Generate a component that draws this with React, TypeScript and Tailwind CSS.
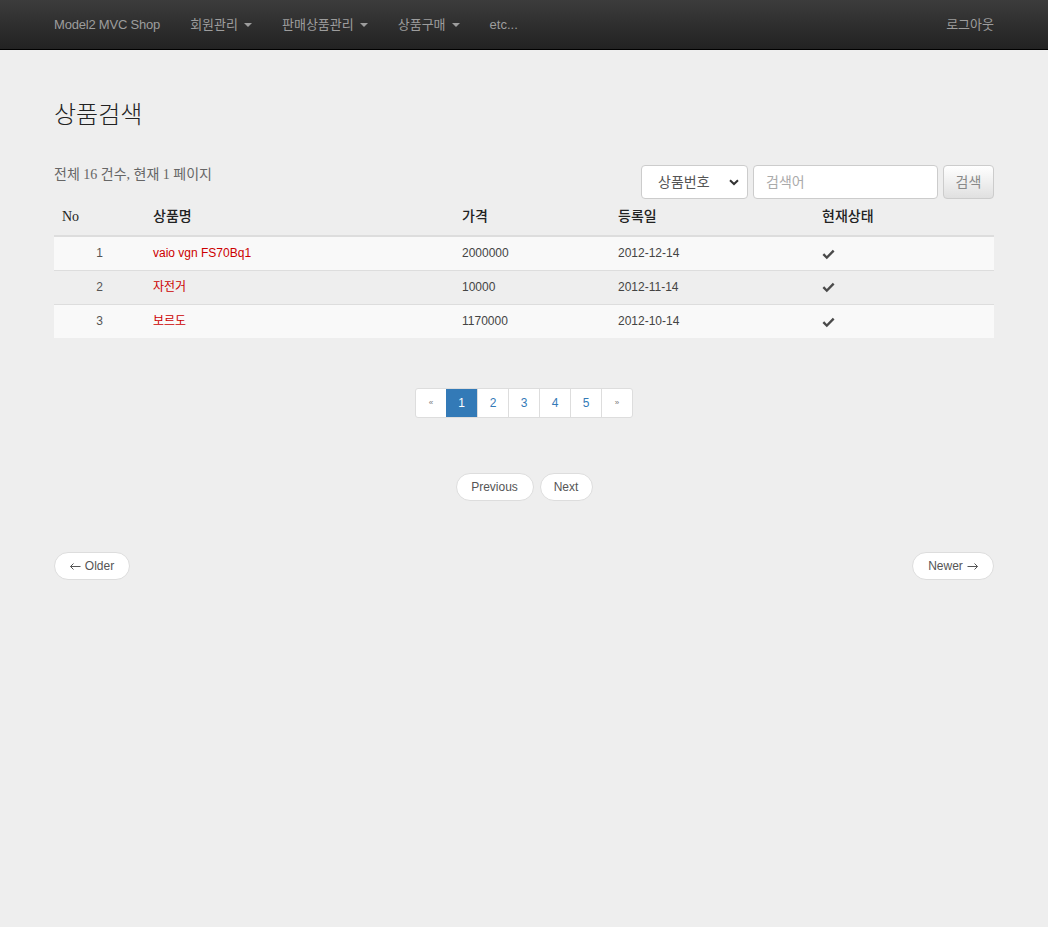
import React from 'react';

const sans = { fontFamily: '"Liberation Sans", "Noto Sans CJK KR", sans-serif' };
const serif = { fontFamily: '"Liberation Serif", "Noto Sans CJK KR", serif' };

const rows = [
  { no: 1, name: 'vaio vgn FS70Bq1', price: '2000000', date: '2012-12-14' },
  { no: 2, name: '자전거', price: '10000', date: '2012-11-14' },
  { no: 3, name: '보르도', price: '1170000', date: '2012-10-14' },
];

function Caret() {
  return <span className="ml-[6px] inline-block h-0 w-0 border-x-[4px] border-t-[4px] border-x-transparent border-t-[#9d9d9d] align-middle" />;
}

function CheckIcon() {
  return (
    <svg width="13" height="11" viewBox="0 0 13 11" className="inline-block">
      <path d="M0.5 6 L2.2 4.3 L4.8 6.9 L10.8 0.8 L12.5 2.5 L4.8 10.2 Z" fill="#4a4a4a" />
    </svg>
  );
}

function Arrow({ dir }: { dir: 'left' | 'right' }) {
  return (
    <svg width="11" height="7" viewBox="0 0 11 7" className={dir === 'left' ? '' : 'rotate-180'}>
      <path d="M0.5 3.5 H10.5 M3.5 0.5 L0.5 3.5 L3.5 6.5" stroke="#555" strokeWidth="1" fill="none" />
    </svg>
  );
}

export default function App() {
  return (
    <div className="min-h-[927px] bg-[#eeeeee] text-[#333]" style={sans}>
      <nav className="h-[50px] border-b border-black bg-gradient-to-b from-[#3c3c3c] to-[#222]">
        <div className="mx-auto flex h-[49px] w-[970px] items-center px-[15px] text-[13px] text-[#9d9d9d]">
          <span className="mr-[30px] tracking-[-0.2px]">Model2 MVC Shop</span>
          <span className="mr-[30px] flex items-center">회원관리<Caret /></span>
          <span className="mr-[30px] flex items-center">판매상품관리<Caret /></span>
          <span className="mr-[30px] flex items-center">상품구매<Caret /></span>
          <span>etc...</span>
          <span className="ml-auto">로그아웃</span>
        </div>
      </nav>

      <div className="mx-auto w-[970px] px-[15px]">
        <h1 className="mt-[48px] mb-[38px] text-[24px] font-light leading-[29px] text-[#222]" style={{ fontFamily: '"Noto Sans CJK KR", sans-serif' }}>상품검색</h1>

        <div className="flex items-start justify-between">
          <p className="text-[14px] leading-[20px] text-[#666]" style={serif}>전체 16 건수, 현재 1 페이지</p>
          <div className="flex gap-[5px]">
            <div className="flex h-[34px] w-[107px] items-center justify-between rounded-[4px] border border-[#ccc] bg-white pl-[16px] pr-[8px] text-[14px] text-[#555]">
              <span>상품번호</span>
              <svg width="10" height="7" viewBox="0 0 10 7"><path d="M1 1.2 L5 5 L9 1.2" stroke="#333" strokeWidth="2" fill="none" /></svg>
            </div>
            <div className="flex h-[34px] w-[185px] items-center rounded-[4px] border border-[#ccc] bg-white px-[12px] text-[14px] text-[#aaa]">검색어</div>
            <div className="flex h-[34px] w-[51px] items-center justify-center rounded-[4px] border border-[#ccc] bg-gradient-to-b from-white to-[#e0e0e0] text-[14px] text-[#888]">검색</div>
          </div>
        </div>

        <table className="mt-[6px] w-full border-collapse text-[12px]">
          <thead>
            <tr className="h-[31px] border-b-2 border-[#ddd] text-left text-[14px] text-[#222]" style={serif}>
              <th className="w-[91px] px-[8px] pb-[7px] font-medium">No</th>
              <th className="w-[309px] px-[8px] pb-[7px] font-medium">상품명</th>
              <th className="w-[156px] px-[8px] pb-[7px] font-medium">가격</th>
              <th className="w-[204px] px-[8px] pb-[7px] font-medium">등록일</th>
              <th className="px-[8px] pb-[7px] font-medium">현재상태</th>
            </tr>
          </thead>
          <tbody>
            {rows.map((r, i) => (
              <tr key={r.no} className={`h-[34px] border-t border-[#ddd] ${i % 2 === 0 ? 'bg-[#f9f9f9]' : ''}`}>
                <td className="px-[8px] text-center text-[#555]">{r.no}</td>
                <td className="px-[8px] text-[#c00]">{r.name}</td>
                <td className="px-[8px] text-[#444]">{r.price}</td>
                <td className="px-[8px] text-[#444]">{r.date}</td>
                <td className="px-[8px]"><CheckIcon /></td>
              </tr>
            ))}
          </tbody>
        </table>

        <div className="mt-[50px] flex justify-center">
          <div className="flex h-[30px] overflow-hidden rounded-[3px] border border-[#ddd] bg-white text-[12px] text-[#337ab7]">
            <span className="flex w-[30px] items-center justify-center text-[8px] text-[#777]">«</span>
            <span className="flex w-[31px] items-center justify-center bg-[#337ab7] text-white">1</span>
            {[2, 3, 4, 5].map((n) => (
              <span key={n} className="flex w-[31px] items-center justify-center border-l border-[#ddd]">{n}</span>
            ))}
            <span className="flex w-[31px] items-center justify-center border-l border-[#ddd] text-[8px] text-[#777]">»</span>
          </div>
        </div>

        <div className="mt-[55px] flex justify-center gap-[6px] text-[12px] text-[#555]">
          <span className="flex h-[28px] w-[78px] items-center justify-center rounded-full border border-[#ddd] bg-white">Previous</span>
          <span className="flex h-[28px] w-[53px] items-center justify-center rounded-full border border-[#ddd] bg-white">Next</span>
        </div>

        <div className="mt-[51px] flex justify-between text-[12px] text-[#555]">
          <span className="flex h-[28px] w-[76px] items-center justify-center gap-[4px] rounded-full border border-[#ddd] bg-white"><Arrow dir="left" />Older</span>
          <span className="flex h-[28px] w-[82px] items-center justify-center gap-[4px] rounded-full border border-[#ddd] bg-white">Newer<Arrow dir="right" /></span>
        </div>
      </div>
    </div>
  );
}
